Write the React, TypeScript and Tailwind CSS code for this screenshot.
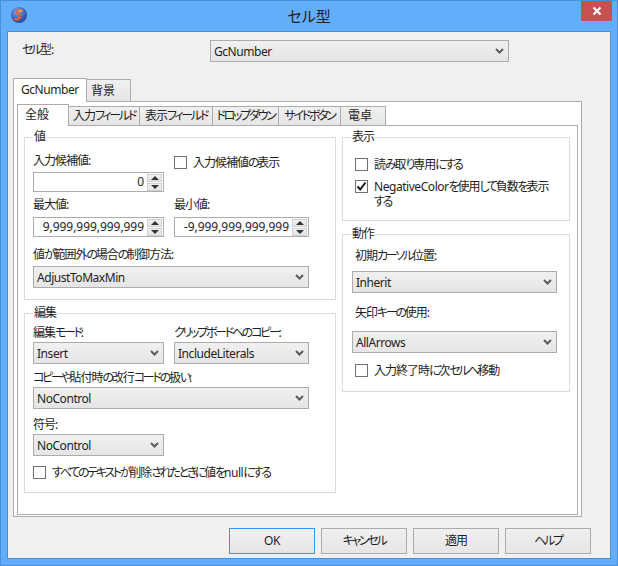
import React from "react";

function T({ children }: { children: string }) {
  const parts = children.match(/[\u3040-\u30ff]+|[\u4e00-\u9fff]+|[^\u3040-\u30ff\u4e00-\u9fff]+/g) ?? [];
  return (
    <>
      {parts.map((p, i) => {
        const kana = /[\u3040-\u30ff]/.test(p);
        const kanji = /[\u4e00-\u9fff]/.test(p);
        return (
          <span key={i} className={kana ? "tracking-[-2.3px]" : kanji ? "tracking-[-1px]" : "tracking-[-0.45px]"}>
            {p}
          </span>
        );
      })}
    </>
  );
}

function Chevron() {
  return (
    <svg width="9" height="6" viewBox="0 0 9 6" className="shrink-0">
      <path d="M1 1 L4.5 4.5 L8 1" fill="none" stroke="#5c5c5c" strokeWidth="2" />
    </svg>
  );
}

function Select({ value, w }: { value: string; w: string }) {
  return (
    <div className={`${w} h-[22px] border border-[#acacac] bg-gradient-to-b from-[#f0f0f0] to-[#e5e5e5] flex items-center justify-between pl-[3px] pr-[4px]`}>
      <span className="tracking-[-0.45px] pt-[1px]">{value}</span>
      <Chevron />
    </div>
  );
}

function Spin() {
  return (
    <div className="w-[15px] h-[17px] mr-[1px] flex flex-col gap-[1px] shrink-0">
      <div className="h-[8px] bg-gradient-to-b from-[#f0f0f0] to-[#e5e5e5] border border-[#d0d0d0] flex items-center justify-center">
        <div className="w-0 h-0 border-x-[4px] border-x-transparent border-b-[4px] border-b-[#333]" />
      </div>
      <div className="h-[8px] bg-gradient-to-b from-[#f0f0f0] to-[#e5e5e5] border border-[#d0d0d0] flex items-center justify-center">
        <div className="w-0 h-0 border-x-[4px] border-x-transparent border-t-[4px] border-t-[#333]" />
      </div>
    </div>
  );
}

function NumInput({ value, w }: { value: string; w: string }) {
  return (
    <div className={`${w} h-[20px] border border-[#acacac] bg-white flex items-center justify-end`}>
      <span className="mr-[3px] tracking-[-0.05px]">{value}</span>
      <Spin />
    </div>
  );
}

function Check({ checked, children, className }: { checked?: boolean; children: React.ReactNode; className?: string }) {
  return (
    <div className={`flex items-start gap-[6px] ${className ?? ""}`}>
      <div className="w-[13px] h-[13px] border border-[#707070] bg-white shrink-0 mt-[2px] flex items-center justify-center">
        {checked && (
          <svg width="11" height="11" viewBox="0 0 11 11">
            <path d="M1.5 5.5 L4.2 8.5 L9.5 1.5" fill="none" stroke="#1a1a1a" strokeWidth="2" />
          </svg>
        )}
      </div>
      <div className="leading-[15px] pt-[1px] whitespace-nowrap">{children}</div>
    </div>
  );
}

function Group({ title, className, children }: { title: string; className: string; children: React.ReactNode }) {
  return (
    <div className={`relative border border-[#dcdcdc] ${className}`}>
      <span className="absolute left-[8px] top-[-9px] bg-white px-[1px] leading-[16px]"><T>{title}</T></span>
      {children}
    </div>
  );
}

function Label({ children, className }: { children: string; className?: string }) {
  return <div className={`h-[18px] leading-[18px] whitespace-nowrap ${className ?? ""}`}><T>{children}</T></div>;
}

function Button({ children, primary }: { children: string; primary?: boolean }) {
  return (
    <div className={`w-[86px] h-[26px] border ${primary ? "border-[#3399ff]" : "border-[#acacac]"} bg-gradient-to-b from-[#f0f0f0] to-[#e5e5e5] flex items-center justify-center`}>
      <span><T>{children}</T></span>
    </div>
  );
}

function InnerTab({ children, active, w }: { children: string; active?: boolean; w: string }) {
  return active ? (
    <div className={`${w} h-[22px] -mb-[1px] relative z-10 border border-b-0 border-[#acacac] bg-white pl-[7px] leading-[20px]`}>{children}</div>
  ) : (
    <div className={`${w} h-[19px] border border-b-0 border-l-0 border-[#acacac] bg-gradient-to-b from-[#f0f0f0] to-[#e5e5e5] flex items-center justify-center whitespace-nowrap`}>
      <span><T>{children}</T></span>
    </div>
  );
}

export default function App() {
  return (
    <div className="w-[618px] h-[566px] bg-[#62aefb] border border-[#4b8fd6] flex flex-col text-[12px] text-[#1e1e1e] font-['Noto_Sans','Noto_Sans_CJK_JP',sans-serif] [font-feature-settings:'palt'] overflow-hidden">
      {/* title bar */}
      <div className="h-[30px] flex items-start relative shrink-0">
        <svg width="18" height="18" viewBox="0 0 18 18" className="ml-[9px] mt-[5px]">
          <defs>
            <radialGradient id="orb" cx="0.4" cy="0.3" r="0.8">
              <stop offset="0" stopColor="#8aa6e8" />
              <stop offset="0.6" stopColor="#3f5fb5" />
              <stop offset="1" stopColor="#24407f" />
            </radialGradient>
          </defs>
          <circle cx="9" cy="9" r="8" fill="url(#orb)" />
          <path d="M12.5 5 C9 3.5 6 5 7.5 7.5 C9 9.5 11 9.5 9.5 12 C8 14 5.5 13.5 4 13" fill="none" stroke="#e0603a" strokeWidth="2.2" />
          <path d="M12.5 5 C11 4.5 9.5 4.5 8.5 5.5" fill="none" stroke="#f2b030" strokeWidth="1.6" />
        </svg>
        <div className="absolute left-0 right-0 top-[4px] text-center text-[15px] leading-[22px] text-[#222]">セル型</div>
        <div className="ml-auto mr-[5px] w-[31px] h-[20px] bg-[#c75050] flex items-center justify-center">
          <svg width="10" height="10" viewBox="0 0 10 10">
            <path d="M1.5 1.5 L8.5 8.5 M8.5 1.5 L1.5 8.5" stroke="#fff" strokeWidth="2.2" />
          </svg>
        </div>
      </div>

      {/* client */}
      <div className="mx-[6px] h-[528px] border border-[#4b8fd6] bg-[#f0f0f0] flex flex-col shrink-0">
        <div className="flex h-[22px] mt-[8px] ml-[14px]">
          <div className="w-[188px] mt-[1px]"><T>セル型:</T></div>
          <Select value="GcNumber" w="w-[299px]" />
        </div>

        {/* outer tabs */}
        <div className="flex items-end ml-[5px] mt-[15px] h-[24px]">
          <div className="w-[74px] h-[24px] -mb-[1px] relative z-10 border border-b-0 border-[#acacac] bg-white pl-[7px] leading-[22px] tracking-[-0.45px]">GcNumber</div>
          <div className="w-[44px] h-[22px] border border-b-0 border-l-0 border-[#acacac] bg-gradient-to-b from-[#f0f0f0] to-[#e5e5e5] pl-[4px] leading-[22px]">背景</div>
        </div>

        {/* outer page */}
        <div className="ml-[5px] w-[569px] h-[416px] border border-[#acacac] bg-white pt-[2px] px-[3px] flex flex-col">
          {/* inner tabs */}
          <div className="flex items-end h-[21px] shrink-0">
            <InnerTab active w="w-[52px]">全般</InnerTab>
            <InnerTab w="w-[71px]">入力フィールド</InnerTab>
            <InnerTab w="w-[73px]">表示フィールド</InnerTab>
            <InnerTab w="w-[66px]">ドロップダウン</InnerTab>
            <InnerTab w="w-[62px]">サイドボタン</InnerTab>
            <div className="w-[45px] h-[19px] border border-b-0 border-l-0 border-[#acacac] bg-gradient-to-b from-[#f0f0f0] to-[#e5e5e5] pl-[7px] leading-[18px]">電卓</div>
          </div>
          {/* inner page */}
          <div className="w-[561px] h-[390px] border border-[#acacac] bg-white flex gap-[6px] pl-[6px] pt-[11px]">
            {/* left column */}
            <div className="w-[312px] flex flex-col gap-[13px]">
              <Group title="値" className="h-[163px] pl-[8px] pt-[14px]">
                <div className="grid grid-cols-[131px_135px] gap-x-[10px]">
                  <div>
                    <Label>入力候補値:</Label>
                    <div className="mt-[2px]"><NumInput value="0" w="w-[131px]" /></div>
                  </div>
                  <Check className="mt-[2px]"><T>入力候補値の表示</T></Check>
                </div>
                <div className="grid grid-cols-[131px_135px] gap-x-[10px] mt-[4px]">
                  <div>
                    <Label>最大値:</Label>
                    <div className="mt-[3px]"><NumInput value="9,999,999,999,999" w="w-[131px]" /></div>
                  </div>
                  <div>
                    <Label>最小値:</Label>
                    <div className="mt-[3px]"><NumInput value="-9,999,999,999,999" w="w-[135px]" /></div>
                  </div>
                </div>
                <Label className="mt-[9px]">値が範囲外の場合の制御方法:</Label>
                <div className="mt-[2px]"><Select value="AdjustToMaxMin" w="w-[276px]" /></div>
              </Group>

              <Group title="編集" className="h-[180px] pl-[8px] pt-[10px]">
                <div className="grid grid-cols-[131px_135px] gap-x-[10px]">
                  <div>
                    <Label>編集モード:</Label>
                    <Select value="Insert" w="w-[131px]" />
                  </div>
                  <div>
                    <Label>クリップボードへのコピー:</Label>
                    <Select value="IncludeLiterals" w="w-[135px]" />
                  </div>
                </div>
                <Label className="mt-[5px]">コピーや貼付時の改行コードの扱い:</Label>
                <Select value="NoControl" w="w-[276px]" />
                <Label className="mt-[7px]">符号:</Label>
                <Select value="NoControl" w="w-[131px]" />
                <Check className="mt-[8px]"><T>すべてのテキストが削除されたときに値をnullにする</T></Check>
              </Group>
            </div>

            {/* right column */}
            <div className="w-[228px] flex flex-col gap-[13px]">
              <Group title="表示" className="h-[84px] pl-[12px] pt-[18px]">
                <Check><T>読み取り専用にする</T></Check>
                <Check className="mt-[6px]" checked>
                  <T>NegativeColorを使用して負数を表示</T>
                  <br />
                  <T>する</T>
                </Check>
              </Group>
              <Group title="動作" className="h-[158px] pl-[9px] pt-[12px]">
                <Label className="ml-[3px]">初期カーソル位置:</Label>
                <div className="mt-[6px]"><Select value="Inherit" w="w-[205px]" /></div>
                <Label className="ml-[3px] mt-[11px]">矢印キーの使用:</Label>
                <div className="mt-[9px]"><Select value="AllArrows" w="w-[205px]" /></div>
                <Check className="mt-[9px] ml-[3px]"><T>入力終了時に次セルへ移動</T></Check>
              </Group>
            </div>
          </div>
        </div>

        {/* buttons */}
        <div className="flex gap-[6px] ml-[221px] mt-[11px]">
          <Button primary>OK</Button>
          <Button>キャンセル</Button>
          <Button>適用</Button>
          <Button>ヘルプ</Button>
        </div>
      </div>
    </div>
  );
}
